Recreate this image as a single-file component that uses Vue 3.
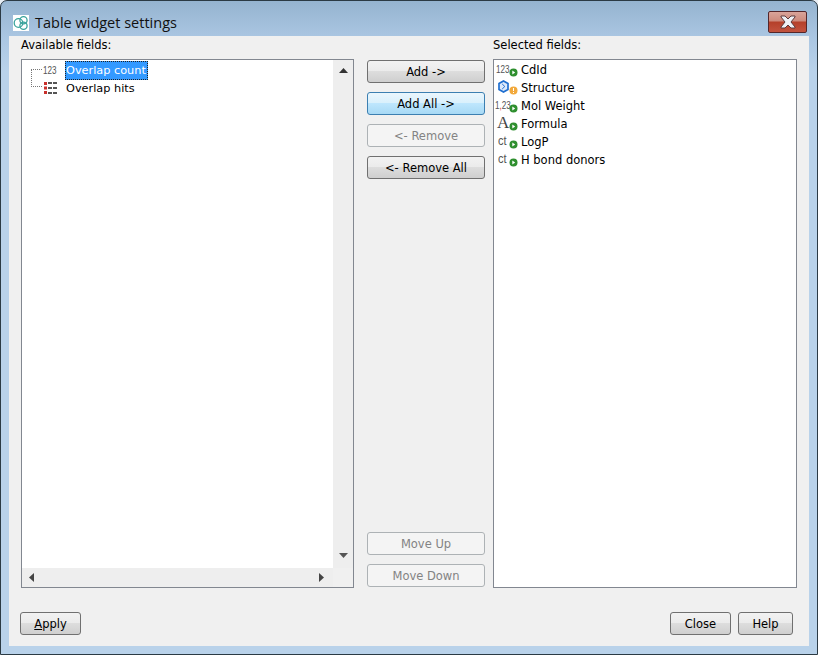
<script setup>
const selected = [
  { name: 'CdId', icon: 'num', dot: 'ok' },
  { name: 'Structure', icon: 'hex', dot: 'warn' },
  { name: 'Mol Weight', icon: 'dec', dot: 'ok' },
  { name: 'Formula', icon: 'a', dot: 'ok' },
  { name: 'LogP', icon: 'ct', dot: 'ok' },
  { name: 'H bond donors', icon: 'ct', dot: 'ok' },
]
</script>

<template>
  <div class="window">
    <header class="titlebar">
      <div class="title-left">
        <svg class="app-icon" width="16" height="16" viewBox="0 0 16 16">
          <rect width="16" height="16" fill="#fff" />
          <g fill="none" stroke="#3aa39c" stroke-width="1.300">
            <circle cx="5.500" cy="8" r="4.300" />
            <circle cx="10.500" cy="5.200" r="3.600" />
            <circle cx="10.500" cy="10.800" r="3.600" />
          </g>
        </svg>
        <span class="title">Table widget settings</span>
      </div>
      <button class="close-x" aria-label="Close">
        <svg width="16" height="14" viewBox="0 0 16 14">
          <path d="M1 1h4l3 3 3-3h4v1l-4 5 4 5v1h-4L8 10l-3 3H1v-1l4-5-4-5z" fill="#eef1f6" stroke="#5c3b3c" stroke-width="1" stroke-linejoin="round" />
        </svg>
      </button>
    </header>

    <main class="content">
      <div class="columns">
        <section class="col col-left">
          <div class="label">Available fields:</div>
          <div class="listbox tree-box">
            <div class="tree-area">
              <svg class="tree-lines" width="14" height="20" viewBox="0 0 14 20">
                <path d="M1 1.500h11M1.500 2v18M1 18.500h11" fill="none" stroke="#777" stroke-dasharray="1 1" />
              </svg>
              <div class="tree-row">
                <span class="tree-icon num-icon">123</span>
                <span class="tree-text selected-text">Overlap count</span>
              </div>
              <div class="tree-row">
                <svg class="tree-icon" width="16" height="14" viewBox="0 0 16 14">
                  <g fill="#c9302c">
                    <rect x="1" y="1" width="3" height="3" />
                    <rect x="1" y="5.500" width="3" height="3" />
                    <rect x="1" y="10" width="3" height="3" />
                  </g>
                  <g fill="#555">
                    <rect x="5" y="1" width="4" height="2" />
                    <rect x="10" y="1" width="4" height="2" />
                    <rect x="5" y="6" width="4" height="2" />
                    <rect x="10" y="6" width="4" height="2" />
                    <rect x="5" y="11" width="4" height="2" />
                    <rect x="10" y="11" width="4" height="2" />
                  </g>
                </svg>
                <span class="tree-text">Overlap hits</span>
              </div>
            </div>
            <div class="vbar">
              <svg width="9" height="5" viewBox="0 0 9 5"><path d="M0 5 4.500 0 9 5z" fill="#333" /></svg>
              <svg width="9" height="5" viewBox="0 0 9 5"><path d="M0 0 4.500 5 9 0z" fill="#555" /></svg>
            </div>
            <div class="hbar">
              <svg width="5" height="9" viewBox="0 0 5 9"><path d="M5 0 0 4.500 5 9z" fill="#444" /></svg>
              <svg width="5" height="9" viewBox="0 0 5 9"><path d="M0 0 5 4.500 0 9z" fill="#444" /></svg>
            </div>
            <div class="corner"></div>
          </div>
        </section>

        <section class="col-mid">
          <div class="btn-group">
            <button class="btn">Add -&gt;</button>
            <button class="btn hot">Add All -&gt;</button>
            <button class="btn off" disabled>&lt;- Remove</button>
            <button class="btn">&lt;- Remove All</button>
          </div>
          <div class="btn-group">
            <button class="btn off" disabled>Move Up</button>
            <button class="btn off" disabled>Move Down</button>
          </div>
        </section>

        <section class="col col-right">
          <div class="label">Selected fields:</div>
          <div class="listbox right-box">
            <div v-for="f in selected" :key="f.name" class="sel-row">
              <span class="sel-icon">
                <span v-if="f.icon === 'num'" class="ico-text">123</span>
                <span v-else-if="f.icon === 'dec'" class="ico-text dec">1<i>,</i>23</span>
                <span v-else-if="f.icon === 'ct'" class="ico-text ct">ct</span>
                <span v-else-if="f.icon === 'a'" class="ico-a">A</span>
                <svg v-else class="hex" width="11" height="13" viewBox="0 0 11 13">
                  <path d="M5.500 1 10 3.600v5.800L5.500 12 1 9.400V3.600z" fill="#dbe9fb" stroke="#1f6fd0" stroke-width="1.700" />
                  <path d="M4.200 4 6.800 6.500 4.200 9" fill="none" stroke="#1f6fd0" />
                </svg>
                <svg class="dot" width="9" height="9" viewBox="0 0 9 9">
                  <template v-if="f.dot === 'ok'">
                    <circle cx="4.500" cy="4.500" r="4" fill="#2f8f2f" />
                    <path d="M3.300 2.500 6.200 4.500 3.300 6.500z" fill="#fff" />
                  </template>
                  <template v-else>
                    <circle cx="4.500" cy="4.500" r="4" fill="#f2a93c" />
                    <path d="M4 2h1v3H4zM4 6h1v1H4z" fill="#fff" />
                  </template>
                </svg>
              </span>
              <span class="sel-text">{{ f.name }}</span>
            </div>
          </div>
        </section>
      </div>

      <footer class="footer">
        <button class="btn foot apply"><u>A</u>pply</button>
        <div class="foot-right">
          <button class="btn foot close">Close</button>
          <button class="btn foot help">Help</button>
        </div>
      </footer>
    </main>
  </div>
</template>

<style>
html, body { margin: 0; background: #e8eef5; }
</style>

<style scoped>
.window {
  width: 818px;
  height: 655px;
  box-sizing: border-box;
  display: flex;
  flex-direction: column;
  border: 1px solid #2b3a44;
  border-radius: 7px 7px 0 0;
  background: linear-gradient(to bottom, #95b4d0 0, #aac6e2 36px, #b9d2ea 70px, #b9d2ea 100%);
  font-family: "DejaVu Sans", sans-serif;
  font-size: 11.500px;
  color: #000;
  overflow: hidden;
}
.titlebar {
  height: 35px;
  flex: none;
  display: flex;
  justify-content: space-between;
  padding: 10px 10px 0 12px;
  box-sizing: border-box;
}
.title-left {
  display: flex;
  align-items: flex-start;
  gap: 6px;
}
.app-icon { margin-top: 4px; }
.title {
  font-family: "Open Sans", sans-serif;
  font-size: 14.500px;
  line-height: 24px;
  color: #111;
}
.close-x {
  width: 39px;
  height: 22px;
  padding: 0;
  border: 1px solid #54262a;
  border-radius: 2px;
  background: linear-gradient(to bottom, #d9a49a 0, #cd8a7c 45%, #b5402a 50%, #c2533f 100%);
  display: flex;
  align-items: center;
  justify-content: center;
}
.content {
  flex: 1;
  min-height: 0;
  margin: 0 8px 8px;
  background: #f0f0f0;
  display: flex;
  flex-direction: column;
  padding: 0 12px 10px 12px;
}
.columns {
  flex: none;
  height: 552px;
  display: flex;
}
.col { display: flex; flex-direction: column; }
.col-left { width: 333px; }
.col-right { width: 304px; margin-left: 8px; }
.col-mid {
  width: 118px;
  margin-left: 13px;
  padding-top: 24px;
  padding-bottom: 1px;
  box-sizing: border-box;
  display: flex;
  flex-direction: column;
  justify-content: space-between;
}
.label {
  height: 23px;
  line-height: 18px;
  flex: none;
  white-space: nowrap;
}
.listbox {
  flex: 1;
  min-height: 0;
  background: #fff;
  border: 1px solid #828790;
  box-sizing: border-box;
}
.tree-box {
  display: grid;
  grid-template-columns: 1fr 20px;
  grid-template-rows: 1fr 19px;
}
.tree-area {
  position: relative;
  padding: 1px 0 0 8px;
}
.tree-lines {
  position: absolute;
  left: 8px;
  top: 8px;
}
.tree-row {
  height: 18px;
  display: flex;
  align-items: center;
  padding-left: 12px;
}
.tree-icon {
  width: 16px;
  margin-left: 1px;
  flex: none;
  white-space: nowrap;
}
.num-icon {
  font-family: "Liberation Sans", sans-serif;
  font-size: 11px;
  color: #555;
  transform: scaleX(0.74);
  transform-origin: left center;
}
.tree-text {
  margin-left: 6px;
  padding: 0 1px 0 0;
  font-size: 11.300px;
  line-height: 17px;
  border: 1px dotted transparent;
  white-space: nowrap;
}
.selected-text {
  background: #3399ff;
  color: #fff;
  border-color: #222;
}
.vbar {
  background: #eeeeee;
  display: flex;
  flex-direction: column;
  justify-content: space-between;
  align-items: center;
  padding: 8px 0 10px;
}
.hbar {
  background: #eeeeee;
  display: flex;
  justify-content: space-between;
  align-items: center;
  padding: 0 9px 0 7px;
}
.corner { background: #f0f0f0; }
.btn-group { display: flex; flex-direction: column; gap: 9px; }
.btn {
  height: 23px;
  box-sizing: border-box;
  padding: 0;
  border: 1px solid #707070;
  border-radius: 3px;
  background: linear-gradient(to bottom, #f2f2f2 0, #ebebeb 48%, #dddddd 50%, #cfcfcf 100%);
  font: inherit;
  color: #000;
}
.btn.hot {
  border-color: #3c7fb1;
  background: linear-gradient(to bottom, #eaf6fd 0, #d9f0fc 48%, #bee6fd 50%, #a7d9f5 100%);
}
.btn.off {
  border-color: #adb2b5;
  background: #f4f4f4;
  color: #838383;
}
.right-box { padding-top: 1px; }
.sel-row {
  height: 18px;
  display: flex;
  align-items: center;
  padding-left: 2px;
}
.sel-icon {
  position: relative;
  width: 25px;
  height: 18px;
  flex: none;
  display: block;
}
.ico-text {
  position: absolute;
  left: 0;
  top: 1px;
  font-family: "Liberation Sans", sans-serif;
  font-size: 11px;
  line-height: 14px;
  color: #555;
  white-space: nowrap;
  transform: scaleX(0.74);
  transform-origin: left center;
}
.ico-text i { color: #d33; font-style: normal; }
.ico-text.dec { left: -1px; }
.ico-text.ct { left: 2px; top: 1px; font-size: 12px; transform: scaleX(0.92); }
.ico-a {
  position: absolute;
  left: 1px;
  top: -1px;
  font-family: "Liberation Serif", serif;
  font-size: 17px;
  line-height: 18px;
  color: #444;
}
.hex { position: absolute; left: 2px; top: 1px; }
.dot { position: absolute; left: 13px; top: 7px; }
.sel-text { white-space: nowrap; }
.footer {
  flex: 1;
  display: flex;
  justify-content: space-between;
  align-items: flex-end;
  padding: 0 4px 1px 0;
}
.foot-right { display: flex; gap: 7px; }
.foot { display: block; }
.apply { width: 61px; margin-left: -1px; }
.close { width: 61px; }
.help { width: 55px; }
</style>
